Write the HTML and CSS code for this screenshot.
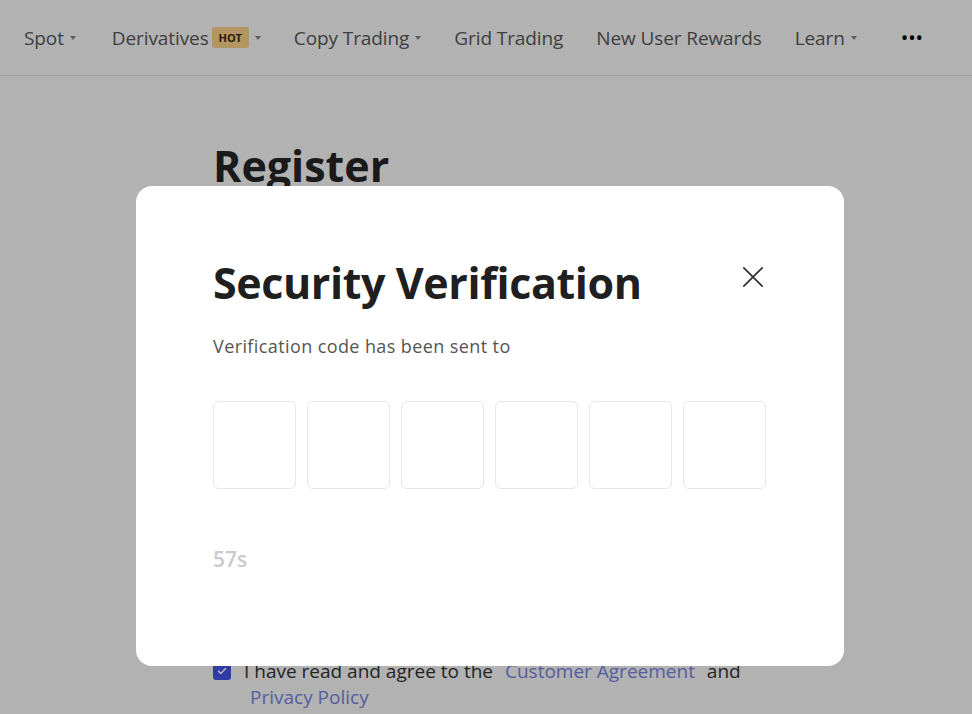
FILE: index.html
```html
<!DOCTYPE html>
<html lang="en">
<head>
  <meta charset="UTF-8" />
  <meta name="viewport" content="width=device-width, initial-scale=1.0" />
  <title>Register</title>
  <link rel="stylesheet" href="styles.css">
</head>
<body>
  <header class="top-nav">
    <a class="nav-item">Spot <span class="caret"></span></a>
    <a class="nav-item">Derivatives <span class="hot">HOT</span> <span class="caret"></span></a>
    <a class="nav-item">Copy Trading <span class="caret"></span></a>
    <a class="nav-item">Grid Trading</a>
    <a class="nav-item">New User Rewards</a>
    <a class="nav-item">Learn <span class="caret"></span></a>
    <a class="nav-item more">&bull;&bull;&bull;</a>
  </header>

  <main class="register">
    <h1>Register</h1>
    <div class="spacer"></div>
    <label class="agree">
      <span class="check">
        <svg width="12" height="12" viewBox="0 0 12 12"><path d="M2.5 6.2l2.4 2.3 4.6-5" fill="none" stroke="#fff" stroke-width="1.6" stroke-linecap="round" stroke-linejoin="round"/></svg>
      </span>
      <span class="agree-text">I have read and agree to the <a class="link">Customer Agreement</a> and<br><a class="link">Privacy Policy</a></span>
    </label>
  </main>

  <div class="overlay">
    <div class="modal">
      <div class="modal-head">
        <h2>Security Verification</h2>
        <button class="close" aria-label="Close">
          <svg width="22" height="22" viewBox="0 0 24 24"><path d="M2 2l20 20M22 2L2 22" stroke="#333" stroke-width="1.9" stroke-linecap="round"/></svg>
        </button>
      </div>
      <p class="sent">Verification code has been sent to</p>
      <div class="code-row">
        <input class="code-box" maxlength="1" />
        <input class="code-box" maxlength="1" />
        <input class="code-box" maxlength="1" />
        <input class="code-box" maxlength="1" />
        <input class="code-box" maxlength="1" />
        <input class="code-box" maxlength="1" />
      </div>
      <div class="timer">57s</div>
    </div>
  </div>
</body>
</html>
```

FILE: styles.css
```css
body {
  margin: 0;
  font-family: "Open Sans", "Noto Sans", sans-serif;
  background: #fff;
  color: #222;
  height: 714px;
  overflow: hidden;
}

.top-nav {
  display: flex;
  align-items: center;
  height: 75px;
  padding-left: 24px;
  border-bottom: 1px solid #e4e4e4;
  gap: 33px;
}

.nav-item {
  display: flex;
  align-items: center;
  gap: 5px;
  font-size: 19px;
  color: #5a5a5a;
  letter-spacing: -0.1px;
}

.nav-item:first-child {
  margin-right: 3px;
}

.caret {
  width: 0;
  height: 0;
  border-left: 3px solid transparent;
  border-right: 3px solid transparent;
  border-top: 4px solid #888;
  margin-left: 1px;
}

.hot {
  background: #ffd68c;
  color: #3a2a10;
  font-size: 11px;
  font-weight: 700;
  padding: 3px 7px;
  border-radius: 3px;
  margin-left: -2px;
}

.more {
  font-size: 20px;
  color: #000;
  margin-left: 11px;
}

.register {
  padding: 64px 0 0 213px;
}

.register h1 {
  margin: 0;
  font-size: 43px;
  font-weight: 700;
  color: #262626;
  line-height: 52px;
}

.spacer {
  height: 466px;
}

.agree {
  display: flex;
  align-items: flex-start;
  gap: 13px;
  font-size: 19px;
  color: #333;
  line-height: 26px;
}

.check {
  width: 18px;
  height: 18px;
  margin-top: 4px;
  background: #4556ee;
  border-radius: 3px;
  display: flex;
  align-items: center;
  justify-content: center;
  flex-shrink: 0;
}

.link {
  color: #7c86e6;
  margin: 0 7px;
}

.agree-text br + .link {
  margin-left: 6px;
}

.overlay {
  position: fixed;
  inset: 0;
  background: rgba(0, 0, 0, 0.3);
  padding: 186px 0 0 136px;
}

.modal {
  width: 708px;
  height: 480px;
  box-sizing: border-box;
  background: #fff;
  border-radius: 16px;
  padding: 72px 0 0 77px;
}

.modal-head {
  display: flex;
  align-items: center;
  justify-content: space-between;
  width: 551px;
}

.modal-head h2 {
  margin: 0;
  font-size: 43px;
  font-weight: 700;
  color: #1f1f1f;
  line-height: 50px;
  letter-spacing: -0.4px;
}

.close {
  border: none;
  background: none;
  padding: 0;
  width: 22px;
  height: 22px;
  margin-top: -12px;
}

.sent {
  margin: 26px 0 0;
  font-size: 18px;
  letter-spacing: 0.4px;
  color: #555;
  line-height: 24px;
}

.code-row {
  display: flex;
  gap: 11px;
  margin-top: 43px;
}

.code-box {
  width: 83px;
  height: 88px;
  box-sizing: border-box;
  border: 1.5px solid #e6e6e6;
  border-radius: 6px;
  outline: none;
}

.timer {
  margin-top: 56px;
  font-size: 21px;
  color: #cacaca;
  font-weight: 600;
}
```
